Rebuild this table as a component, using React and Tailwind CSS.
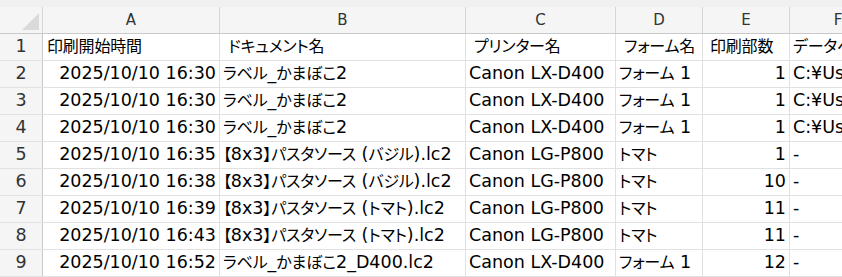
const cols = [
  { key: 'A', w: 'w-[177px]' },
  { key: 'B', w: 'w-[246px]' },
  { key: 'C', w: 'w-[150px]' },
  { key: 'D', w: 'w-[87px]' },
  { key: 'E', w: 'w-[87px]' },
  { key: 'F', w: 'w-[97px]' },
]

const header = ['印刷開始時間', 'ドキュメント名', 'プリンター名', 'フォーム名', '印刷部数', 'データベース']
const headerPad = ['pl-[4px]', 'pl-[8px]', 'pl-[8px]', 'pl-[8px]', 'pl-[7px]', 'pl-[3px]']

const rows = [
  ['2025/10/10 16:30', 'ラベル_かまぼこ2', 'Canon LX-D400', 'フォーム 1', '1', 'C:¥Users'],
  ['2025/10/10 16:30', 'ラベル_かまぼこ2', 'Canon LX-D400', 'フォーム 1', '1', 'C:¥Users'],
  ['2025/10/10 16:30', 'ラベル_かまぼこ2', 'Canon LX-D400', 'フォーム 1', '1', 'C:¥Users'],
  ['2025/10/10 16:35', '【8x3】パスタソース (バジル).lc2', 'Canon LG-P800', 'トマト', '1', '-'],
  ['2025/10/10 16:38', '【8x3】パスタソース (バジル).lc2', 'Canon LG-P800', 'トマト', '10', '-'],
  ['2025/10/10 16:39', '【8x3】パスタソース (トマト).lc2', 'Canon LG-P800', 'トマト', '11', '-'],
  ['2025/10/10 16:43', '【8x3】パスタソース (トマト).lc2', 'Canon LG-P800', 'トマト', '11', '-'],
  ['2025/10/10 16:52', 'ラベル_かまぼこ2_D400.lc2', 'Canon LX-D400', 'フォーム 1', '12', '-'],
]

// right-aligned columns in data rows: A (dates) and E (counts)
const rightCols = [0, 4]

// japanese runs are set a bit smaller than latin, like Yu Gothic in Excel
function Txt({ s }) {
  return (
    <span className="whitespace-pre">
      {s.split(/([\u3000-\u30ff\u4e00-\u9fff]+)/).map((part, i) =>
        /[\u3000-\u30ff\u4e00-\u9fff]/.test(part)
          ? <span key={i} className="text-[16px] tracking-[-0.2px]">{part}</span>
          : part
      )}
    </span>
  )
}

export default function App() {
  return (
    <div className="w-[842px] h-[277px] overflow-hidden bg-white text-black font-['DejaVu_Sans','Noto_Sans_CJK_JP',sans-serif] [font-feature-settings:'palt']">
      <div className="h-[7px] bg-[#f0f0f0]" />

      {/* column letters */}
      <div className="flex h-[27px] bg-[#f5f5f5] border-b border-[#c9c9c9] text-[15px] text-[#333]">
        <div className="w-[43px] shrink-0 border-r border-[#d6d6d6] flex items-end justify-end pr-[3px] pb-[3px]">
          <div className="w-0 h-0 border-l-[17px] border-l-transparent border-b-[17px] border-b-[#dadada]" />
        </div>
        {cols.map(c => (
          <div key={c.key} className={`${c.w} shrink-0 border-r border-[#d6d6d6] flex items-center justify-center leading-none`}>
            {c.key}
          </div>
        ))}
      </div>

      {/* row 1: titles */}
      <div className="flex h-[27px] border-b border-[#e1e1e1] text-[17.5px] leading-none">
        <div className="w-[43px] shrink-0 bg-[#f5f5f5] border-r border-[#c9c9c9] flex items-center justify-center text-[#333]">1</div>
        {header.map((h, i) => (
          <div key={i} className={`${cols[i].w} shrink-0 border-r border-[#e1e1e1] flex items-center overflow-hidden ${headerPad[i]}`}>
            <Txt s={h} />
          </div>
        ))}
      </div>

      {rows.map((r, ri) => (
        <div key={ri} className="flex h-[27px] border-b border-[#e1e1e1] text-[17.5px] leading-none">
          <div className="w-[43px] shrink-0 bg-[#f5f5f5] border-r border-[#c9c9c9] flex items-center justify-center text-[#333]">{ri + 2}</div>
          {r.map((v, i) => (
            <div key={i} className={`${cols[i].w} shrink-0 border-r border-[#e1e1e1] flex items-center overflow-hidden px-[3px] ${rightCols.includes(i) ? 'justify-end' : ''}`}>
              <Txt s={v} />
            </div>
          ))}
        </div>
      ))}
    </div>
  )
}
